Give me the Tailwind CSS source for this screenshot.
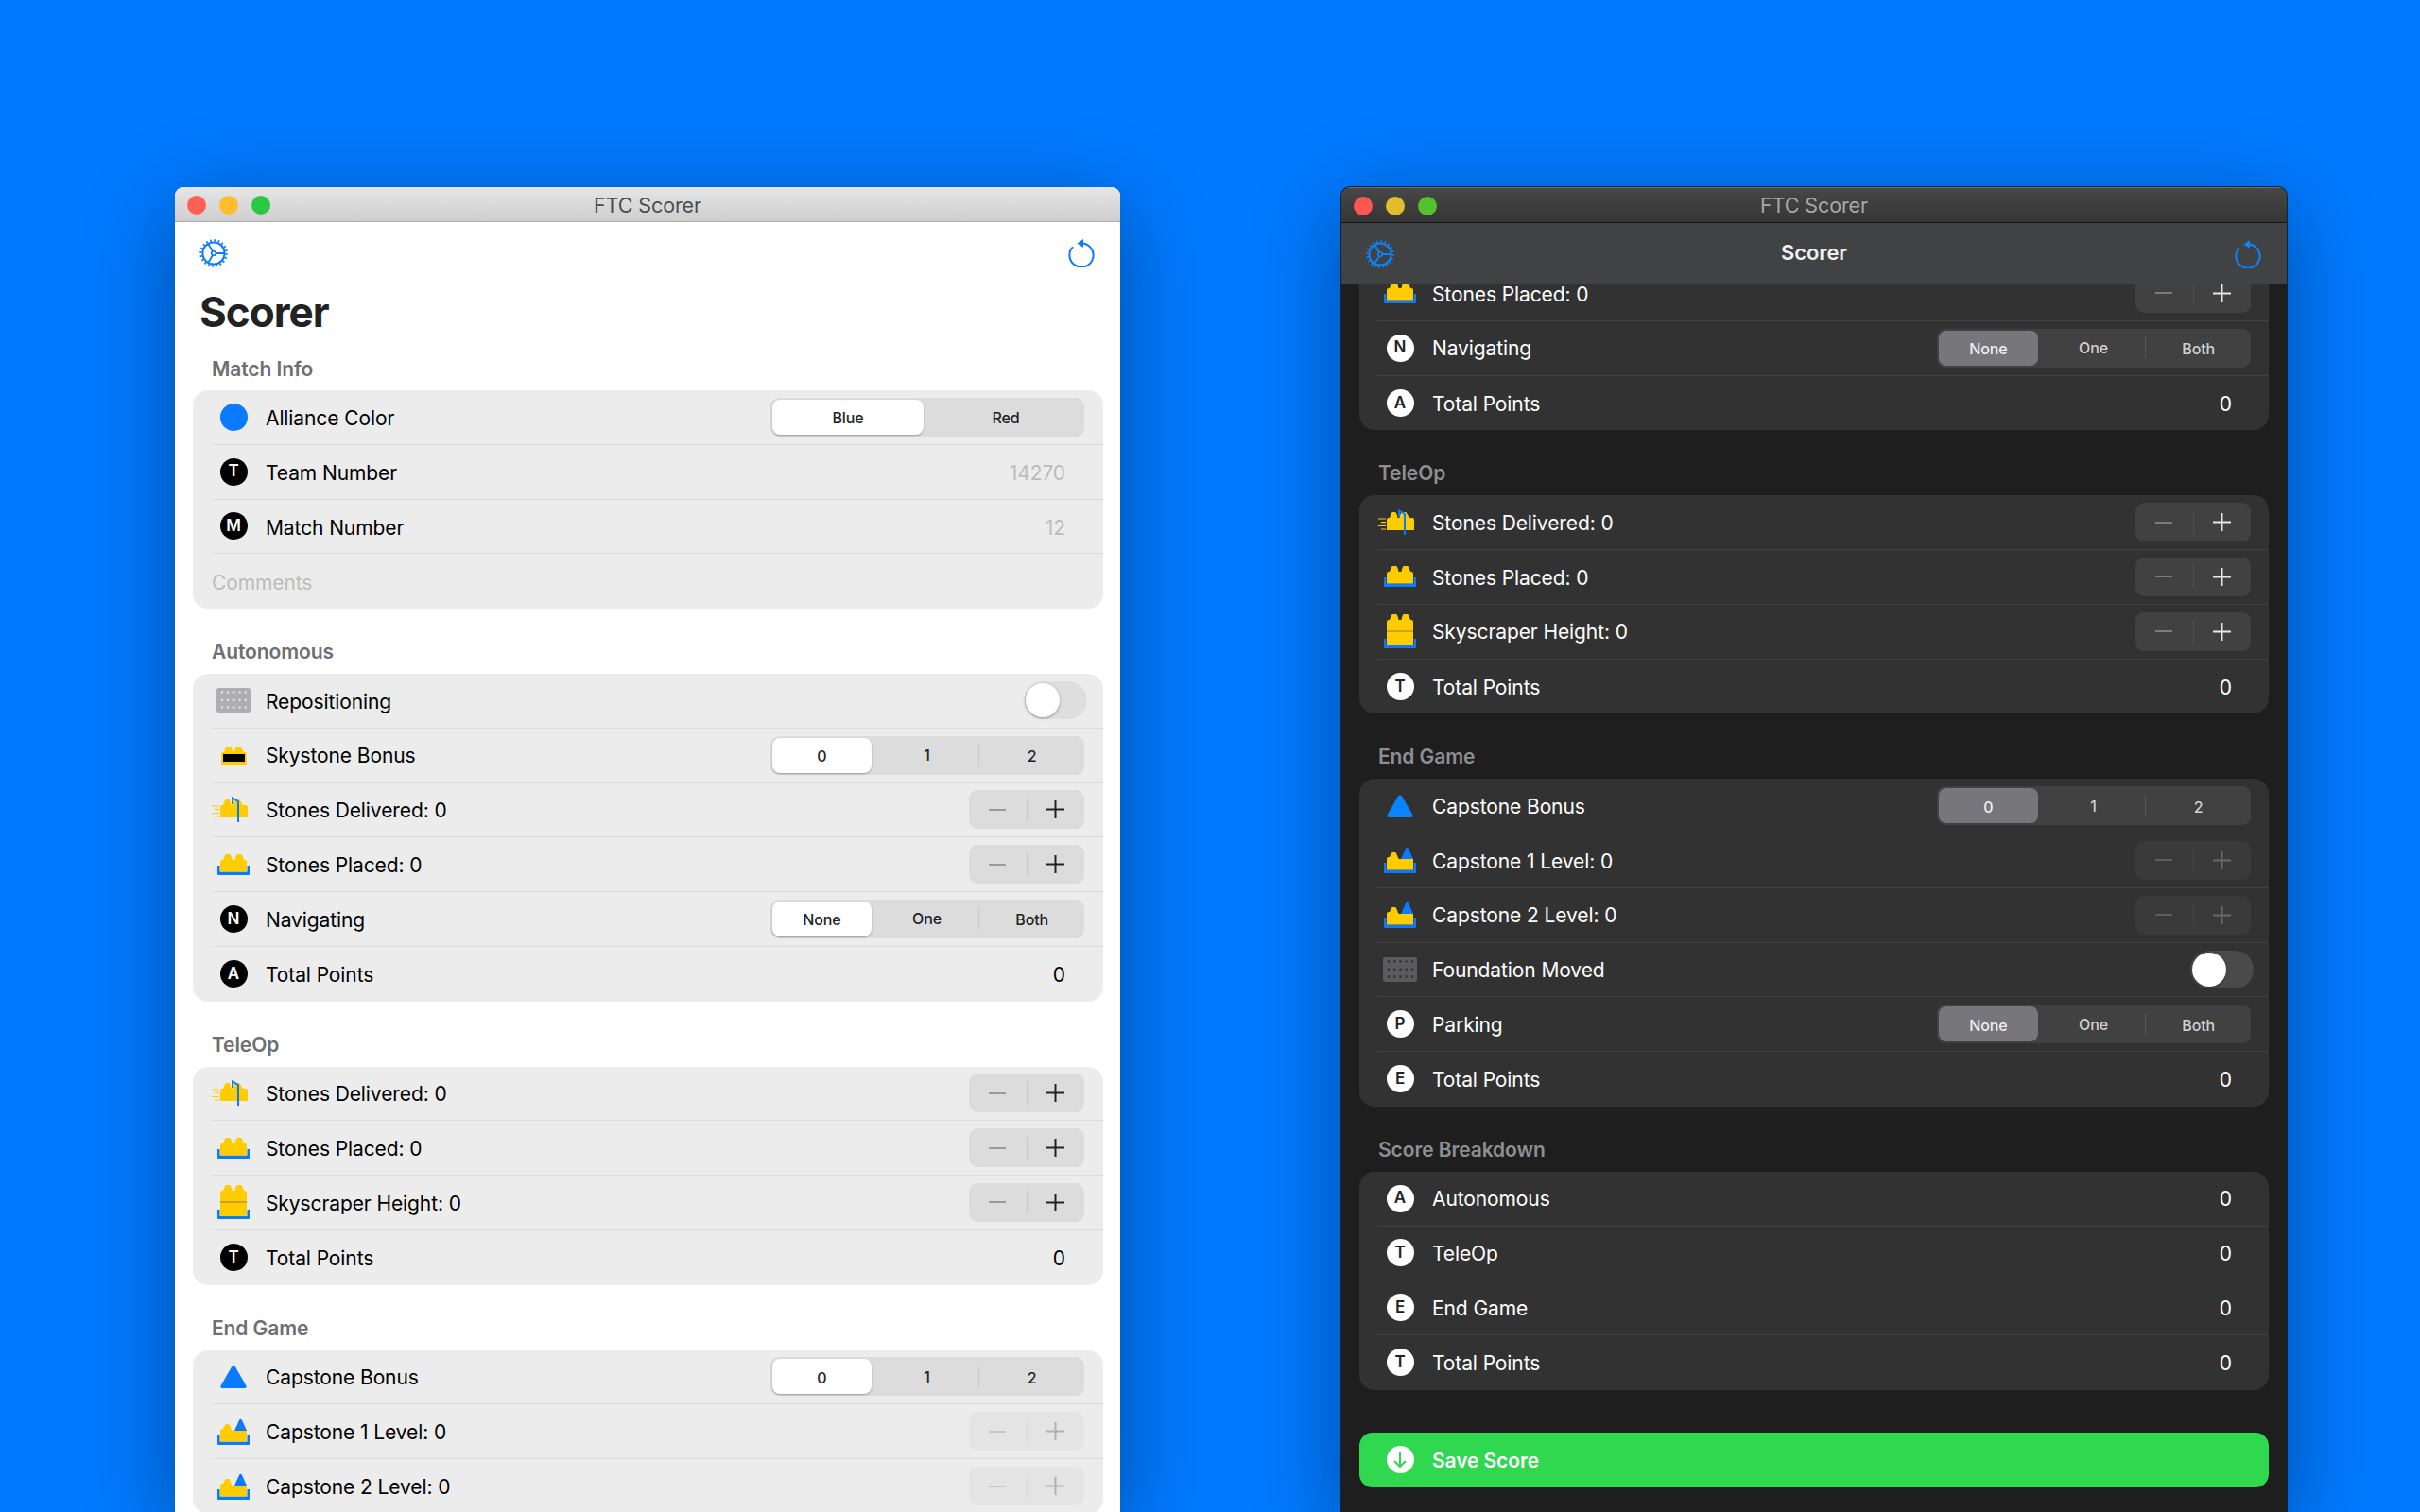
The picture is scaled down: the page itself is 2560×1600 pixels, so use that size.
<!DOCTYPE html>
<html lang="en">
<head>
  <meta charset="UTF-8" />
  <title>FTC Scorer</title>
  <script src="https://cdn.jsdelivr.net/npm/@tailwindcss/browser@4"></script>
</head>
<body class="h-[1600px] overflow-hidden bg-[#007aff] font-[Inter,sans-serif]">
  <svg class="hidden">
    <symbol id="gear" viewBox="0 0 30 30">
      <g fill="none" stroke="currentColor">
        <circle cx="15" cy="15" r="11.6" stroke-width="2"/>
        <circle cx="15" cy="15" r="13.6" stroke-width="2.4" stroke-dasharray="1.7 2.57"/>
        <circle cx="15" cy="15" r="2.3" stroke-width="1.6"/>
        <path d="M17.300 15h9M14 13 9.200 5M14 17 9.200 25" stroke-width="1.800"/>
      </g>
    </symbol>
    <symbol id="reset" viewBox="0 0 30 30">
      <path d="M15 4.400A12.600 12.600 0 1 1 6.100 8.100" fill="none" stroke="currentColor" stroke-width="2"/>
      <path d="M17 0v9l-6.500-4.500z" fill="currentColor"/>
    </symbol>
    <symbol id="stone" viewBox="0 0 30 20">
      <path d="M1 20V8q0-2 2-2h1l1.500-4Q6 0 7.500 0h3q1.500 0 2 2l1 4h2l1-4q.5-2 2-2h3q1.500 0 2 2L26 6h1q2 0 2 2v12z" fill="#ffcc00"/>
    </symbol>
    <symbol id="placed" viewBox="0 0 34 22">
      <path d="M0 12h2.500v6.500h29V12H34v9q0 1-1 1H1q-1 0-1-1z" fill="#0a7aff"/>
      <path d="M3 18.500V8q0-2 2-2h1l1.500-4Q8 0 9.500 0h3q1.500 0 2 2l1 4h3l1-4q.5-2 2-2h3q1.500 0 2 2L28 6h1q2 0 2 2v10.500z" fill="#ffcc00"/>
    </symbol>
    <symbol id="delivered" viewBox="0 0 38 27">
      <path d="M9 22V11q0-2 2-2h1l1.500-4q.5-2 2-2h2q1.500 0 2 2l1 4h2l1-4q.5-2 2-2h3q1.500 0 2 2L33 9h3q2 0 2 2v11z" fill="#ffcc00"/>
      <path d="M0 10h8M3 13.700h5M0 17.500h8M3 21h5" stroke="#ffcc00" stroke-width="1.200"/>
      <path d="M22 8V1.500L28 5v22" fill="none" stroke="#0a7aff" stroke-width="2"/>
    </symbol>
    <symbol id="tower" viewBox="0 0 34 36">
      <path d="M0 26h2.500v7H31.500v-7H34v9q0 1-1 1H1q-1 0-1-1z" fill="#0a7aff"/>
      <path d="M3 33V8q0-2 2-2h1l1.500-4Q8 0 9.500 0h3q1.500 0 2 2l1 4h3l1-4q.5-2 2-2h3q1.500 0 2 2L28 6h1q2 0 2 2v25z" fill="#ffcc00"/>
      <path d="M3 18h28" stroke="#c9a227" stroke-width="2"/>
    </symbol>
    <symbol id="cap" viewBox="0 0 34 28">
      <path d="M0 17h2.500v7.500H31.500V17H34v10q0 1-1 1H1q-1 0-1-1z" fill="#0a7aff"/>
      <path d="M3 24.500V13q0-2 2-2h1l1.500-3Q8 6 9.500 6h2q1.500 0 2 2l1.500 4q.5 1 1.500 1H31v11.500z" fill="#ffcc00"/>
      <path d="M18 13 23 2q1.500-2.500 3 0l5 11z" fill="#0a7aff"/>
    </symbol>
    <symbol id="foundation" viewBox="0 0 36 26">
      <rect width="36" height="26" rx="2.500" fill="currentColor"/>
      <path d="M6 4.500h26M6 12.700h26M6 20.500h26" fill="none" stroke-linecap="round" stroke-width="2.400" stroke="var(--dot)" stroke-dasharray="0 6.200"/>
    </symbol>
  </svg>

  <div class="flex pl-[185px] pt-[198px] gap-[234px] items-start">

    <!-- light window -->
    <section class="w-[1000px] h-[1402px] rounded-t-[9px] overflow-hidden bg-white shadow-[0_22px_90px_rgba(0,0,0,0.38)] text-black tracking-[-0.1px] flex flex-col shrink-0">
      <div class="relative h-[37px] shrink-0 flex items-center justify-center bg-gradient-to-b from-[#e6e6e6] to-[#cecece] border-b border-[#adadad]">
        <div class="absolute left-[13px] top-[9px] flex gap-[14px]">
          <span class="w-5 h-5 rounded-full bg-[#ff5f57]"></span>
          <span class="w-5 h-5 rounded-full bg-[#ffbd2e]"></span>
          <span class="w-5 h-5 rounded-full bg-[#28c940]"></span>
        </div>
        <span class="pt-[2px] text-[21.5px] text-[#4d4d4d]">FTC Scorer</span>
      </div>

      <div class="h-[65px] shrink-0 flex items-center justify-between px-[26px] text-[#0a7aff]">
        <svg class="w-[30px] h-[30px]"><use href="#gear"/></svg>
        <svg class="w-[30px] h-[30px]"><use href="#reset"/></svg>
      </div>
      <h1 class="h-[60px] shrink-0 flex items-center pl-[26px] text-[44px] font-bold text-[#222] tracking-[-1px]">Scorer</h1>

      <div class="pl-[19px] pr-[18px]">
        <h2 class="h-[53px] flex items-end pb-[11px] pl-[20px] text-[21px] leading-[22px] font-semibold text-[#6e6e73]">Match Info</h2>
        <div class="rounded-[16px] bg-[#ececec] divide-y divide-[#dcdcdc] pl-[20px]">
          <div class="h-[57.75px] flex items-center">
            <span class="w-[46px] flex justify-center"><span class="w-[29px] h-[29px] rounded-full bg-[#0a7aff]"></span></span>
            <span class="ml-[11px] pt-[2px] flex-1 text-[21px]">Alliance Color</span>
            <div class="w-[332px] h-[41px] mr-[20px] rounded-[9px] bg-[#dcdcdc] grid grid-cols-2 items-center text-[16px] font-medium text-[#222]">
              <span class="h-[37px] ml-[2px] mr-[4px] pt-[2px] flex items-center justify-center rounded-[8px] bg-white shadow-[0_1px_2px_rgba(0,0,0,0.3)]">Blue</span>
              <span class="pt-[2px] text-center">Red</span>
            </div>
          </div>
          <div class="h-[57.75px] flex items-center">
            <span class="w-[46px] flex justify-center"><span class="w-[29px] h-[29px] rounded-full bg-black text-white text-[17px] font-semibold flex items-center justify-center">T</span></span>
            <span class="ml-[11px] pt-[3px] flex-1 text-[21px]">Team Number</span>
            <span class="mr-[40px] pt-[3px] text-[21px] text-[#bcbcbc]">14270</span>
          </div>
          <div class="h-[57.75px] flex items-center">
            <span class="w-[46px] flex justify-center"><span class="w-[29px] h-[29px] rounded-full bg-black text-white text-[17px] font-semibold flex items-center justify-center">M</span></span>
            <span class="ml-[11px] pt-[3px] flex-1 text-[21px]">Match Number</span>
            <span class="mr-[40px] pt-[3px] text-[21px] text-[#bcbcbc]">12</span>
          </div>
          <div class="h-[57.75px] pt-[3px] flex items-center text-[21px] text-[#bcbcbc]">Comments</div>
        </div>

        <h2 class="h-[69px] flex items-end pb-[12px] pl-[20px] text-[21px] leading-[22px] font-semibold text-[#6e6e73]">Autonomous</h2>
        <div class="rounded-[16px] bg-[#ececec] divide-y divide-[#dcdcdc] pl-[20px]">
          <div class="h-[57.75px] flex items-center">
            <span class="w-[46px] flex justify-center"><svg class="w-[36px] h-[26px] text-[#aeaeb2] [--dot:#e4e4e6]"><use href="#foundation"/></svg></span>
            <span class="ml-[11px] pt-[2px] flex-1 text-[21px]">Repositioning</span>
            <span class="w-[67px] h-[40px] mr-[17px] rounded-full bg-[#dedede] p-[2px] flex"><span class="w-[36px] h-[36px] rounded-full bg-white shadow-[0_1px_3px_rgba(0,0,0,0.35)]"></span></span>
          </div>
          <div class="h-[57.75px] flex items-center">
            <span class="w-[46px] flex justify-center"><span class="relative w-[29px] h-[19px] inline-block"><svg class="w-[29px] h-[19px]"><use href="#stone"/></svg><span class="absolute left-[3px] right-[3px] top-[8px] bottom-[3px] bg-black"></span></span></span>
            <span class="ml-[11px] pt-[2px] flex-1 text-[21px]">Skystone Bonus</span>
            <div class="w-[332px] h-[41px] mr-[20px] rounded-[9px] bg-[#dcdcdc] grid grid-cols-3 items-center text-[16px] font-medium text-[#222]">
              <span class="h-[37px] ml-[2px] mr-[4px] pt-[2px] flex items-center justify-center rounded-[8px] bg-white shadow-[0_1px_2px_rgba(0,0,0,0.3)]">0</span>
              <span class="pt-[1px] leading-[23px] text-center border-r border-[#c8c8c8]">1</span>
              <span class="pt-[2px] text-center">2</span>
            </div>
          </div>
          <div class="h-[57.75px] flex items-center">
            <span class="w-[46px] flex justify-center"><svg class="w-[38px] h-[27px] -ml-[8px]"><use href="#delivered"/></svg></span>
            <span class="ml-[11px] pt-[2px] flex-1 text-[21px]">Stones Delivered: 0</span>
            <div class="w-[122px] h-[41px] mr-[20px] rounded-[9px] bg-[#dcdcdc] flex items-center text-[#222]">
              <span class="h-[24px] flex-1 flex items-center justify-center border-r border-[#c8c8c8]"><span class="w-[18px] h-[2px] bg-[#9a9a9a]"></span></span>
              <span class="flex-1 flex justify-center"><svg class="w-[19px] h-[19px]" viewBox="0 0 19 19"><path d="M9.500 0v19M0 9.500h19" stroke="currentColor" stroke-width="2"/></svg></span>
            </div>
          </div>
          <div class="h-[57.75px] flex items-center">
            <span class="w-[46px] flex justify-center"><svg class="w-[34px] h-[22px]"><use href="#placed"/></svg></span>
            <span class="ml-[11px] pt-[2px] flex-1 text-[21px]">Stones Placed: 0</span>
            <div class="w-[122px] h-[41px] mr-[20px] rounded-[9px] bg-[#dcdcdc] flex items-center text-[#222]">
              <span class="h-[24px] flex-1 flex items-center justify-center border-r border-[#c8c8c8]"><span class="w-[18px] h-[2px] bg-[#9a9a9a]"></span></span>
              <span class="flex-1 flex justify-center"><svg class="w-[19px] h-[19px]" viewBox="0 0 19 19"><path d="M9.500 0v19M0 9.500h19" stroke="currentColor" stroke-width="2"/></svg></span>
            </div>
          </div>
          <div class="h-[57.75px] flex items-center">
            <span class="w-[46px] flex justify-center"><span class="w-[29px] h-[29px] rounded-full bg-black text-white text-[17px] font-semibold flex items-center justify-center">N</span></span>
            <span class="ml-[11px] pt-[2px] flex-1 text-[21px]">Navigating</span>
            <div class="w-[332px] h-[41px] mr-[20px] rounded-[9px] bg-[#dcdcdc] grid grid-cols-3 items-center text-[16px] font-medium text-[#222]">
              <span class="h-[37px] ml-[2px] mr-[4px] pt-[2px] flex items-center justify-center rounded-[8px] bg-white shadow-[0_1px_2px_rgba(0,0,0,0.3)]">None</span>
              <span class="pt-[1px] leading-[23px] text-center border-r border-[#c8c8c8]">One</span>
              <span class="pt-[2px] text-center">Both</span>
            </div>
          </div>
          <div class="h-[57.75px] flex items-center">
            <span class="w-[46px] flex justify-center"><span class="w-[29px] h-[29px] rounded-full bg-black text-white text-[17px] font-semibold flex items-center justify-center">A</span></span>
            <span class="ml-[11px] pt-[2px] flex-1 text-[21px]">Total Points</span>
            <span class="mr-[40px] pt-[2px] text-[21px]">0</span>
          </div>
        </div>

        <h2 class="h-[69px] flex items-end pb-[12px] pl-[20px] text-[21px] leading-[22px] font-semibold text-[#6e6e73]">TeleOp</h2>
        <div class="rounded-[16px] bg-[#ececec] divide-y divide-[#dcdcdc] pl-[20px]">
          <div class="h-[57.75px] flex items-center">
            <span class="w-[46px] flex justify-center"><svg class="w-[38px] h-[27px] -ml-[8px]"><use href="#delivered"/></svg></span>
            <span class="ml-[11px] pt-[2px] flex-1 text-[21px]">Stones Delivered: 0</span>
            <div class="w-[122px] h-[41px] mr-[20px] rounded-[9px] bg-[#dcdcdc] flex items-center text-[#222]">
              <span class="h-[24px] flex-1 flex items-center justify-center border-r border-[#c8c8c8]"><span class="w-[18px] h-[2px] bg-[#9a9a9a]"></span></span>
              <span class="flex-1 flex justify-center"><svg class="w-[19px] h-[19px]" viewBox="0 0 19 19"><path d="M9.500 0v19M0 9.500h19" stroke="currentColor" stroke-width="2"/></svg></span>
            </div>
          </div>
          <div class="h-[57.75px] flex items-center">
            <span class="w-[46px] flex justify-center"><svg class="w-[34px] h-[22px]"><use href="#placed"/></svg></span>
            <span class="ml-[11px] pt-[2px] flex-1 text-[21px]">Stones Placed: 0</span>
            <div class="w-[122px] h-[41px] mr-[20px] rounded-[9px] bg-[#dcdcdc] flex items-center text-[#222]">
              <span class="h-[24px] flex-1 flex items-center justify-center border-r border-[#c8c8c8]"><span class="w-[18px] h-[2px] bg-[#9a9a9a]"></span></span>
              <span class="flex-1 flex justify-center"><svg class="w-[19px] h-[19px]" viewBox="0 0 19 19"><path d="M9.500 0v19M0 9.500h19" stroke="currentColor" stroke-width="2"/></svg></span>
            </div>
          </div>
          <div class="h-[57.75px] flex items-center">
            <span class="w-[46px] flex justify-center"><svg class="w-[34px] h-[36px]"><use href="#tower"/></svg></span>
            <span class="ml-[11px] pt-[2px] flex-1 text-[21px]">Skyscraper Height: 0</span>
            <div class="w-[122px] h-[41px] mr-[20px] rounded-[9px] bg-[#dcdcdc] flex items-center text-[#222]">
              <span class="h-[24px] flex-1 flex items-center justify-center border-r border-[#c8c8c8]"><span class="w-[18px] h-[2px] bg-[#9a9a9a]"></span></span>
              <span class="flex-1 flex justify-center"><svg class="w-[19px] h-[19px]" viewBox="0 0 19 19"><path d="M9.500 0v19M0 9.500h19" stroke="currentColor" stroke-width="2"/></svg></span>
            </div>
          </div>
          <div class="h-[57.75px] flex items-center">
            <span class="w-[46px] flex justify-center"><span class="w-[29px] h-[29px] rounded-full bg-black text-white text-[17px] font-semibold flex items-center justify-center">T</span></span>
            <span class="ml-[11px] pt-[2px] flex-1 text-[21px]">Total Points</span>
            <span class="mr-[40px] pt-[2px] text-[21px]">0</span>
          </div>
        </div>

        <h2 class="h-[69px] flex items-end pb-[12px] pl-[20px] text-[21px] leading-[22px] font-semibold text-[#6e6e73]">End Game</h2>
        <div class="rounded-[16px] bg-[#ececec] divide-y divide-[#dcdcdc] pl-[20px]">
          <div class="h-[57.75px] flex items-center">
            <span class="w-[46px] flex justify-center"><svg class="w-[28px] h-[24px]" viewBox="0 0 28 24"><path d="M12 1.500q2-2 4 0l11.500 20q.8 2.500-1.500 2.500H2Q-.3 24 .5 21.500z" fill="#0a7aff"/></svg></span>
            <span class="ml-[11px] pt-[2px] flex-1 text-[21px]">Capstone Bonus</span>
            <div class="w-[332px] h-[41px] mr-[20px] rounded-[9px] bg-[#dcdcdc] grid grid-cols-3 items-center text-[16px] font-medium text-[#222]">
              <span class="h-[37px] ml-[2px] mr-[4px] pt-[2px] flex items-center justify-center rounded-[8px] bg-white shadow-[0_1px_2px_rgba(0,0,0,0.3)]">0</span>
              <span class="pt-[1px] leading-[23px] text-center border-r border-[#c8c8c8]">1</span>
              <span class="pt-[2px] text-center">2</span>
            </div>
          </div>
          <div class="h-[57.75px] flex items-center">
            <span class="w-[46px] flex justify-center"><svg class="w-[34px] h-[28px]"><use href="#cap"/></svg></span>
            <span class="ml-[11px] pt-[2px] flex-1 text-[21px]">Capstone 1 Level: 0</span>
            <div class="w-[122px] h-[41px] mr-[20px] rounded-[9px] bg-[#e4e4e4] flex items-center text-[#b0b0b0]">
              <span class="h-[24px] flex-1 flex items-center justify-center border-r border-[#d6d6d6]"><span class="w-[18px] h-[2px] bg-[#c6c6c6]"></span></span>
              <span class="flex-1 flex justify-center"><svg class="w-[19px] h-[19px]" viewBox="0 0 19 19"><path d="M9.500 0v19M0 9.500h19" stroke="currentColor" stroke-width="2"/></svg></span>
            </div>
          </div>
          <div class="h-[57.75px] flex items-center">
            <span class="w-[46px] flex justify-center"><svg class="w-[34px] h-[28px]"><use href="#cap"/></svg></span>
            <span class="ml-[11px] pt-[2px] flex-1 text-[21px]">Capstone 2 Level: 0</span>
            <div class="w-[122px] h-[41px] mr-[20px] rounded-[9px] bg-[#e4e4e4] flex items-center text-[#b0b0b0]">
              <span class="h-[24px] flex-1 flex items-center justify-center border-r border-[#d6d6d6]"><span class="w-[18px] h-[2px] bg-[#c6c6c6]"></span></span>
              <span class="flex-1 flex justify-center"><svg class="w-[19px] h-[19px]" viewBox="0 0 19 19"><path d="M9.500 0v19M0 9.500h19" stroke="currentColor" stroke-width="2"/></svg></span>
            </div>
          </div>
        </div>
      </div>
    </section>

    <!-- dark window -->
    <section class="w-[1000px] h-[1403px] rounded-t-[9px] overflow-hidden bg-[#1e1e1e] shadow-[0_22px_90px_rgba(0,0,0,0.38)] ring-1 ring-[#10243f] text-white tracking-[-0.1px] flex flex-col shrink-0">
      <div class="relative h-[38px] shrink-0 flex items-center justify-center bg-gradient-to-b from-[#474747] to-[#353535] border-t border-t-[#707070] border-b border-b-[#141414]">
        <div class="absolute left-[13px] top-[9px] flex gap-[14px]">
          <span class="w-5 h-5 rounded-full bg-[#fc5753]"></span>
          <span class="w-5 h-5 rounded-full bg-[#e2bd2f]"></span>
          <span class="w-5 h-5 rounded-full bg-[#53c22b]"></span>
        </div>
        <span class="pt-[1px] text-[21.5px] text-[#a8a8a8]">FTC Scorer</span>
      </div>

      <div class="relative z-10 h-[65px] shrink-0 flex items-center justify-between px-[26px] bg-[#414243] text-[#0a84ff]">
        <svg class="w-[30px] h-[30px]"><use href="#gear"/></svg>
        <span class="pb-[2px] text-[22px] font-semibold text-[#f0f0f0]">Scorer</span>
        <svg class="w-[30px] h-[30px]"><use href="#reset"/></svg>
      </div>

      <div class="-mt-[19px] px-[19px]">
        <div class="rounded-b-[16px] bg-[#323232] divide-y divide-[#424242] pl-[20px]">
          <div class="h-[57.75px] flex items-center">
            <span class="w-[46px] flex justify-center"><svg class="w-[34px] h-[22px]"><use href="#placed"/></svg></span>
            <span class="ml-[11px] pt-[2px] flex-1 text-[21px]">Stones Placed: 0</span>
            <div class="w-[122px] h-[41px] mr-[19px] rounded-[9px] bg-[#414141] flex items-center text-[#e8e8e8]">
              <span class="h-[24px] flex-1 flex items-center justify-center border-r border-[#525252]"><span class="w-[18px] h-[2px] bg-[#7c7c7c]"></span></span>
              <span class="flex-1 flex justify-center"><svg class="w-[19px] h-[19px]" viewBox="0 0 19 19"><path d="M9.500 0v19M0 9.500h19" stroke="currentColor" stroke-width="2"/></svg></span>
            </div>
          </div>
          <div class="h-[57.75px] flex items-center">
            <span class="w-[46px] flex justify-center"><span class="w-[29px] h-[29px] rounded-full bg-white text-[#222] text-[17px] font-semibold flex items-center justify-center">N</span></span>
            <span class="ml-[11px] pt-[2px] flex-1 text-[21px]">Navigating</span>
            <div class="w-[332px] h-[41px] mr-[19px] rounded-[9px] bg-[#414141] grid grid-cols-3 items-center text-[16px] font-medium text-[#d0d0d0]">
              <span class="h-[37px] ml-[2px] mr-[4px] pt-[2px] flex items-center justify-center rounded-[8px] bg-[#77767b] text-[#efefef]">None</span>
              <span class="pt-[1px] leading-[23px] text-center border-r border-[#555]">One</span>
              <span class="pt-[2px] text-center">Both</span>
            </div>
          </div>
          <div class="h-[57.75px] flex items-center">
            <span class="w-[46px] flex justify-center"><span class="w-[29px] h-[29px] rounded-full bg-white text-[#222] text-[17px] font-semibold flex items-center justify-center">A</span></span>
            <span class="ml-[11px] pt-[2px] flex-1 text-[21px]">Total Points</span>
            <span class="mr-[39px] pt-[2px] text-[21px]">0</span>
          </div>
        </div>

        <h2 class="h-[69px] flex items-end pb-[12px] pl-[20px] text-[21px] leading-[22px] font-semibold text-[#8e8e93]">TeleOp</h2>
        <div class="rounded-[16px] bg-[#323232] divide-y divide-[#424242] pl-[20px]">
          <div class="h-[57.75px] flex items-center">
            <span class="w-[46px] flex justify-center"><svg class="w-[38px] h-[27px] -ml-[8px]"><use href="#delivered"/></svg></span>
            <span class="ml-[11px] pt-[2px] flex-1 text-[21px]">Stones Delivered: 0</span>
            <div class="w-[122px] h-[41px] mr-[19px] rounded-[9px] bg-[#414141] flex items-center text-[#e8e8e8]">
              <span class="h-[24px] flex-1 flex items-center justify-center border-r border-[#525252]"><span class="w-[18px] h-[2px] bg-[#7c7c7c]"></span></span>
              <span class="flex-1 flex justify-center"><svg class="w-[19px] h-[19px]" viewBox="0 0 19 19"><path d="M9.500 0v19M0 9.500h19" stroke="currentColor" stroke-width="2"/></svg></span>
            </div>
          </div>
          <div class="h-[57.75px] flex items-center">
            <span class="w-[46px] flex justify-center"><svg class="w-[34px] h-[22px]"><use href="#placed"/></svg></span>
            <span class="ml-[11px] pt-[2px] flex-1 text-[21px]">Stones Placed: 0</span>
            <div class="w-[122px] h-[41px] mr-[19px] rounded-[9px] bg-[#414141] flex items-center text-[#e8e8e8]">
              <span class="h-[24px] flex-1 flex items-center justify-center border-r border-[#525252]"><span class="w-[18px] h-[2px] bg-[#7c7c7c]"></span></span>
              <span class="flex-1 flex justify-center"><svg class="w-[19px] h-[19px]" viewBox="0 0 19 19"><path d="M9.500 0v19M0 9.500h19" stroke="currentColor" stroke-width="2"/></svg></span>
            </div>
          </div>
          <div class="h-[57.75px] flex items-center">
            <span class="w-[46px] flex justify-center"><svg class="w-[34px] h-[36px]"><use href="#tower"/></svg></span>
            <span class="ml-[11px] pt-[2px] flex-1 text-[21px]">Skyscraper Height: 0</span>
            <div class="w-[122px] h-[41px] mr-[19px] rounded-[9px] bg-[#414141] flex items-center text-[#e8e8e8]">
              <span class="h-[24px] flex-1 flex items-center justify-center border-r border-[#525252]"><span class="w-[18px] h-[2px] bg-[#7c7c7c]"></span></span>
              <span class="flex-1 flex justify-center"><svg class="w-[19px] h-[19px]" viewBox="0 0 19 19"><path d="M9.500 0v19M0 9.500h19" stroke="currentColor" stroke-width="2"/></svg></span>
            </div>
          </div>
          <div class="h-[57.75px] flex items-center">
            <span class="w-[46px] flex justify-center"><span class="w-[29px] h-[29px] rounded-full bg-white text-[#222] text-[17px] font-semibold flex items-center justify-center">T</span></span>
            <span class="ml-[11px] pt-[2px] flex-1 text-[21px]">Total Points</span>
            <span class="mr-[39px] pt-[2px] text-[21px]">0</span>
          </div>
        </div>

        <h2 class="h-[69px] flex items-end pb-[12px] pl-[20px] text-[21px] leading-[22px] font-semibold text-[#8e8e93]">End Game</h2>
        <div class="rounded-[16px] bg-[#323232] divide-y divide-[#424242] pl-[20px]">
          <div class="h-[57.75px] flex items-center">
            <span class="w-[46px] flex justify-center"><svg class="w-[28px] h-[24px]" viewBox="0 0 28 24"><path d="M12 1.500q2-2 4 0l11.500 20q.8 2.500-1.500 2.500H2Q-.3 24 .5 21.500z" fill="#0a84ff"/></svg></span>
            <span class="ml-[11px] pt-[2px] flex-1 text-[21px]">Capstone Bonus</span>
            <div class="w-[332px] h-[41px] mr-[19px] rounded-[9px] bg-[#414141] grid grid-cols-3 items-center text-[16px] font-medium text-[#d0d0d0]">
              <span class="h-[37px] ml-[2px] mr-[4px] pt-[2px] flex items-center justify-center rounded-[8px] bg-[#77767b] text-[#efefef]">0</span>
              <span class="pt-[1px] leading-[23px] text-center border-r border-[#555]">1</span>
              <span class="pt-[2px] text-center">2</span>
            </div>
          </div>
          <div class="h-[57.75px] flex items-center">
            <span class="w-[46px] flex justify-center"><svg class="w-[34px] h-[28px]"><use href="#cap"/></svg></span>
            <span class="ml-[11px] pt-[2px] flex-1 text-[21px]">Capstone 1 Level: 0</span>
            <div class="w-[122px] h-[41px] mr-[19px] rounded-[9px] bg-[#3a3a3a] flex items-center text-[#6a6a6a]">
              <span class="h-[24px] flex-1 flex items-center justify-center border-r border-[#454545]"><span class="w-[18px] h-[2px] bg-[#5e5e5e]"></span></span>
              <span class="flex-1 flex justify-center"><svg class="w-[19px] h-[19px]" viewBox="0 0 19 19"><path d="M9.500 0v19M0 9.500h19" stroke="currentColor" stroke-width="2"/></svg></span>
            </div>
          </div>
          <div class="h-[57.75px] flex items-center">
            <span class="w-[46px] flex justify-center"><svg class="w-[34px] h-[28px]"><use href="#cap"/></svg></span>
            <span class="ml-[11px] pt-[2px] flex-1 text-[21px]">Capstone 2 Level: 0</span>
            <div class="w-[122px] h-[41px] mr-[19px] rounded-[9px] bg-[#3a3a3a] flex items-center text-[#6a6a6a]">
              <span class="h-[24px] flex-1 flex items-center justify-center border-r border-[#454545]"><span class="w-[18px] h-[2px] bg-[#5e5e5e]"></span></span>
              <span class="flex-1 flex justify-center"><svg class="w-[19px] h-[19px]" viewBox="0 0 19 19"><path d="M9.500 0v19M0 9.500h19" stroke="currentColor" stroke-width="2"/></svg></span>
            </div>
          </div>
          <div class="h-[57.75px] flex items-center">
            <span class="w-[46px] flex justify-center"><svg class="w-[36px] h-[26px] text-[#5b5b5e] [--dot:#2e2e2e]"><use href="#foundation"/></svg></span>
            <span class="ml-[11px] pt-[2px] flex-1 text-[21px]">Foundation Moved</span>
            <span class="w-[67px] h-[40px] mr-[16px] rounded-full bg-[#4a4a4a] p-[2px] flex"><span class="w-[36px] h-[36px] rounded-full bg-white shadow-[0_1px_3px_rgba(0,0,0,0.35)]"></span></span>
          </div>
          <div class="h-[57.75px] flex items-center">
            <span class="w-[46px] flex justify-center"><span class="w-[29px] h-[29px] rounded-full bg-white text-[#222] text-[17px] font-semibold flex items-center justify-center">P</span></span>
            <span class="ml-[11px] pt-[2px] flex-1 text-[21px]">Parking</span>
            <div class="w-[332px] h-[41px] mr-[19px] rounded-[9px] bg-[#414141] grid grid-cols-3 items-center text-[16px] font-medium text-[#d0d0d0]">
              <span class="h-[37px] ml-[2px] mr-[4px] pt-[2px] flex items-center justify-center rounded-[8px] bg-[#77767b] text-[#efefef]">None</span>
              <span class="pt-[1px] leading-[23px] text-center border-r border-[#555]">One</span>
              <span class="pt-[2px] text-center">Both</span>
            </div>
          </div>
          <div class="h-[57.75px] flex items-center">
            <span class="w-[46px] flex justify-center"><span class="w-[29px] h-[29px] rounded-full bg-white text-[#222] text-[17px] font-semibold flex items-center justify-center">E</span></span>
            <span class="ml-[11px] pt-[2px] flex-1 text-[21px]">Total Points</span>
            <span class="mr-[39px] pt-[2px] text-[21px]">0</span>
          </div>
        </div>

        <h2 class="h-[69px] flex items-end pb-[12px] pl-[20px] text-[21px] leading-[22px] font-semibold text-[#8e8e93]">Score Breakdown</h2>
        <div class="rounded-[16px] bg-[#323232] divide-y divide-[#424242] pl-[20px]">
          <div class="h-[57.75px] flex items-center">
            <span class="w-[46px] flex justify-center"><span class="w-[29px] h-[29px] rounded-full bg-white text-[#222] text-[17px] font-semibold flex items-center justify-center">A</span></span>
            <span class="ml-[11px] pt-[2px] flex-1 text-[21px]">Autonomous</span>
            <span class="mr-[39px] pt-[2px] text-[21px]">0</span>
          </div>
          <div class="h-[57.75px] flex items-center">
            <span class="w-[46px] flex justify-center"><span class="w-[29px] h-[29px] rounded-full bg-white text-[#222] text-[17px] font-semibold flex items-center justify-center">T</span></span>
            <span class="ml-[11px] pt-[2px] flex-1 text-[21px]">TeleOp</span>
            <span class="mr-[39px] pt-[2px] text-[21px]">0</span>
          </div>
          <div class="h-[57.75px] flex items-center">
            <span class="w-[46px] flex justify-center"><span class="w-[29px] h-[29px] rounded-full bg-white text-[#222] text-[17px] font-semibold flex items-center justify-center">E</span></span>
            <span class="ml-[11px] pt-[2px] flex-1 text-[21px]">End Game</span>
            <span class="mr-[39px] pt-[2px] text-[21px]">0</span>
          </div>
          <div class="h-[57.75px] flex items-center">
            <span class="w-[46px] flex justify-center"><span class="w-[29px] h-[29px] rounded-full bg-white text-[#222] text-[17px] font-semibold flex items-center justify-center">T</span></span>
            <span class="ml-[11px] pt-[2px] flex-1 text-[21px]">Total Points</span>
            <span class="mr-[39px] pt-[2px] text-[21px]">0</span>
          </div>
        </div>

        <button class="mt-[45px] w-full h-[58px] rounded-[14px] bg-[#30d84f] flex items-center pl-[20px] text-[21px] font-semibold text-white">
          <span class="w-[46px] flex justify-center"><span class="w-[29px] h-[29px] rounded-full bg-white flex items-center justify-center"><svg class="w-[16px] h-[18px]" viewBox="0 0 16 18"><path d="M8 1v15M2 10l6 6 6-6" fill="none" stroke="#30d84f" stroke-width="2"/></svg></span></span>
          <span class="ml-[11px] pt-[2px]">Save Score</span>
        </button>
      </div>
    </section>
  </div>
</body>
</html>
